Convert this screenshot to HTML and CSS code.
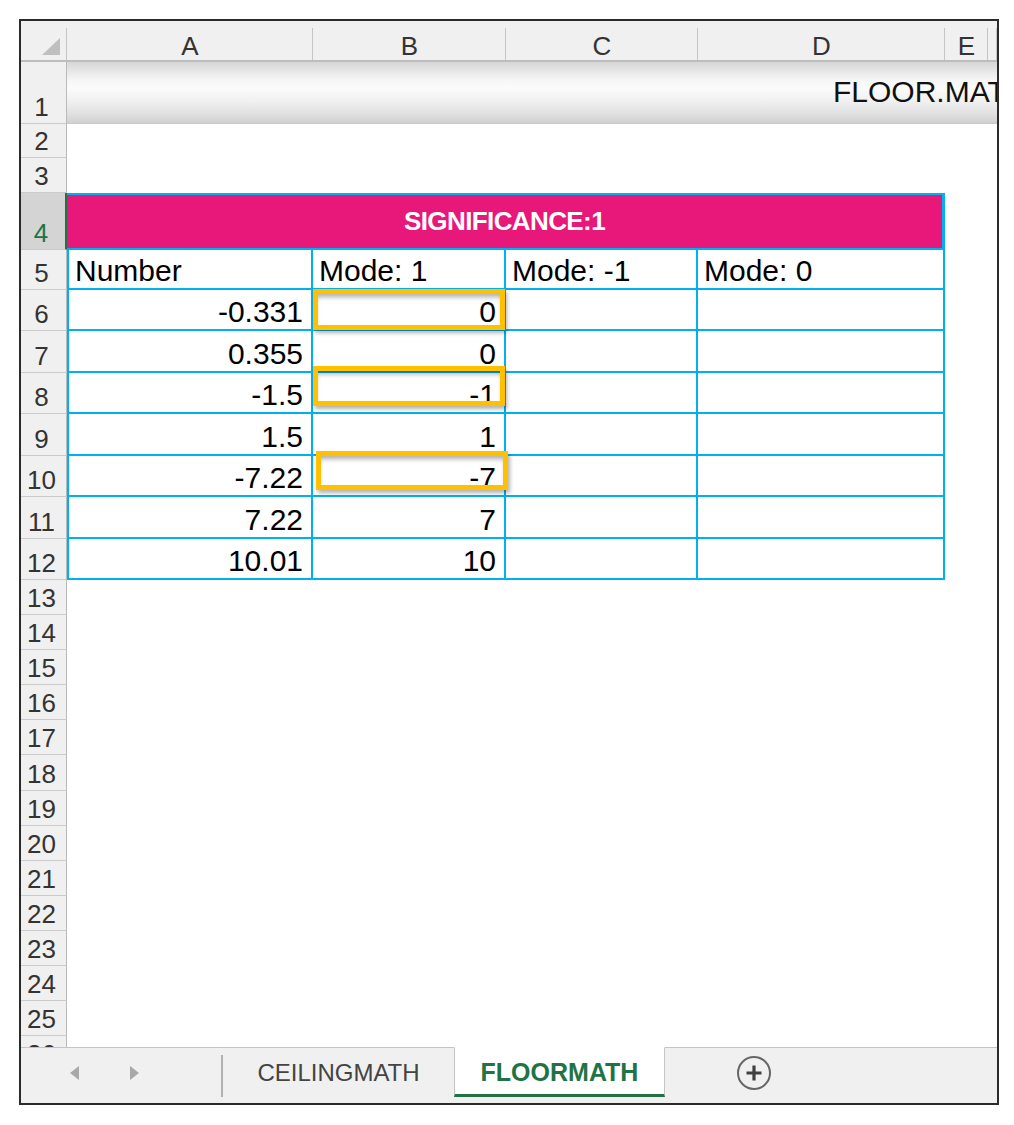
FILE: index.html
```html
<!DOCTYPE html>
<html>
<head>
<meta charset="utf-8">
<title>FLOOR.MATH</title>
<link rel="stylesheet" href="styles.css">
</head>
<body>
<div class="frame">
  <div class="sheet">
    <div class="ch corner"><svg class="corner-tri" width="46" height="41" viewBox="0 0 46 41"><polygon points="39,17 39,34 21,34" fill="#bfbfbf"/></svg></div>
    <div class="ch">A</div>
    <div class="ch">B</div>
    <div class="ch">C</div>
    <div class="ch">D</div>
    <div class="ch">E</div>
    <div class="ch"></div>

    <div class="rh">1</div><div class="banner"><span>FLOOR.MATH</span></div>
    <div class="rh">2</div><div class="blank"></div>
    <div class="rh">3</div><div class="blank"></div>
    <div class="rh sel">4</div><div class="title">SIGNIFICANCE:1</div><div class="rest"></div>

    <div class="rh">5</div><div class="c first">Number</div><div class="c">Mode: 1</div><div class="c">Mode: -1</div><div class="c">Mode: 0</div><div class="rest"></div>
    <div class="rh">6</div><div class="c first num">-0.331</div><div class="c num hl hl-1">0</div><div class="c"></div><div class="c"></div><div class="rest"></div>
    <div class="rh">7</div><div class="c first num">0.355</div><div class="c num">0</div><div class="c"></div><div class="c"></div><div class="rest"></div>
    <div class="rh">8</div><div class="c first num">-1.5</div><div class="c num hl hl-2">-1</div><div class="c"></div><div class="c"></div><div class="rest"></div>
    <div class="rh">9</div><div class="c first num">1.5</div><div class="c num">1</div><div class="c"></div><div class="c"></div><div class="rest"></div>
    <div class="rh">10</div><div class="c first num">-7.22</div><div class="c num hl hl-3">-7</div><div class="c"></div><div class="c"></div><div class="rest"></div>
    <div class="rh">11</div><div class="c first num">7.22</div><div class="c num">7</div><div class="c"></div><div class="c"></div><div class="rest"></div>
    <div class="rh">12</div><div class="c first num">10.01</div><div class="c num">10</div><div class="c"></div><div class="c"></div><div class="rest"></div>

    <div class="rh">13</div><div class="blank"></div>
    <div class="rh">14</div><div class="blank"></div>
    <div class="rh">15</div><div class="blank"></div>
    <div class="rh">16</div><div class="blank"></div>
    <div class="rh">17</div><div class="blank"></div>
    <div class="rh">18</div><div class="blank"></div>
    <div class="rh">19</div><div class="blank"></div>
    <div class="rh">20</div><div class="blank"></div>
    <div class="rh">21</div><div class="blank"></div>
    <div class="rh">22</div><div class="blank"></div>
    <div class="rh">23</div><div class="blank"></div>
    <div class="rh">24</div><div class="blank"></div>
    <div class="rh">25</div><div class="blank"></div>
    <div class="rh">26</div><div class="blank"></div>
  </div>

  <div class="tabs">
    <div class="nav">
      <span class="arrow arrow-left"></span>
      <span class="arrow arrow-right"></span>
    </div>
    <div class="sep"></div>
    <div class="tab">CEILINGMATH</div>
    <div class="tab active">FLOORMATH</div>
    <div class="add">
      <svg width="36" height="36" viewBox="0 0 36 36">
        <circle cx="18" cy="18" r="16" fill="none" stroke="#666" stroke-width="2"/>
        <path d="M18 10.5v15M10.5 18h15" stroke="#404040" stroke-width="3.2" fill="none"/>
      </svg>
    </div>
  </div>
</div>
</body>
</html>
```

FILE: styles.css
```css
* {
  box-sizing: border-box;
}

body {
  margin: 0;
  background: #ffffff;
  font-family: "Liberation Sans", Arial, sans-serif;
  color: #000;
}

.frame {
  margin: 19px 0 0 19px;
  width: 980px;
  height: 1086px;
  border: 2px solid #2a2a2a;
  display: flex;
  flex-direction: column;
  overflow: hidden;
  background: #fff;
}

.sheet {
  flex: none;
  height: 1026px;
  display: grid;
  grid-template-columns: 46px 246px 193px 192px 247px 43px 1fr;
  grid-template-rows: 41px 62px 34px 35px 57px 40px repeat(7, 41.43px) repeat(14, 35.1px);
  overflow: hidden;
}

/* column headers */
.ch {
  display: flex;
  justify-content: center;
  align-items: flex-end;
  padding-bottom: 1px;
  font-size: 26px;
  line-height: 1;
  color: #333;
  background:
    linear-gradient(#c4c4c4, #c4c4c4) right 0 bottom 0 / 1px calc(100% - 7px) no-repeat,
    #f0f0f0;
  border-bottom: 2px solid #bdbdbd;
}

.corner {
  position: relative;
  padding: 0;
}

.corner-tri {
  position: absolute;
  left: 0;
  top: 0;
}

/* row headers */
.rh {
  display: flex;
  justify-content: center;
  align-items: flex-end;
  padding: 0 4px 3px 0;
  font-size: 26px;
  line-height: 1;
  color: #333;
  background: #f0f0f0;
  border-bottom: 1px solid #cbcbcb;
  border-right: 1px solid #bababa;
}

.rh.sel {
  background: #d4d4d4;
  color: #217346;
  border-right: 2px solid #217346;
}

/* row 1 banner */
.banner {
  grid-column: 2 / -1;
  display: flex;
  align-items: flex-end;
  padding: 0 0 17px 766px;
  font-size: 30px;
  line-height: 1;
  white-space: nowrap;
  overflow: hidden;
  color: #111;
  background: linear-gradient(to bottom,
    #d6d6d6 0%,
    #e4e4e4 12%,
    #f6f6f6 30%,
    #fbfbfb 42%,
    #f1f1f1 62%,
    #e2e2e2 82%,
    #d2d2d2 97%,
    #c8c8c8 100%);
}

.blank {
  grid-column: 2 / -1;
}

.rest {
  grid-column: 6 / -1;
}

/* row 4 title */
.title {
  grid-column: 2 / 6;
  display: flex;
  justify-content: center;
  align-items: center;
  background: #e8177a;
  border: 2px solid #00b0f0;
  border-left: 0;
  border-right-width: 3px;
  color: #fff;
  font-weight: bold;
  font-size: 26px;
  letter-spacing: -0.6px;
  line-height: 1;
  padding-bottom: 2px;
}

/* table cells */
.c {
  display: flex;
  align-items: flex-end;
  padding: 0 8px 2px 6px;
  font-size: 30px;
  line-height: 1;
  white-space: nowrap;
  border-right: 2px solid #00b0f0;
  border-bottom: 2px solid #00b0f0;
}

.c.first {
  border-left: 2px solid #00b0f0;
}

.c.num {
  justify-content: flex-end;
}

.hl {
  position: relative;
}

.hl::after {
  content: "";
  position: absolute;
  border: 5px solid #ffc000;
  box-shadow: inset 0 5px 5px -2px rgba(0, 0, 0, 0.32), 2px 3px 4px rgba(0, 0, 0, 0.3);
  pointer-events: none;
  z-index: 2;
}

.hl-1::after {
  top: -1px;
  left: 0;
  right: -1px;
  bottom: -1px;
}

.hl-2::after {
  top: -7px;
  left: 0;
  right: -1px;
  bottom: 6px;
}

.hl-3::after {
  top: -5px;
  left: 3px;
  right: -4px;
  bottom: 5px;
}

/* sheet tabs */
.tabs {
  flex: none;
  height: 56px;
  display: flex;
  background: #f0f0f0;
  border-top: 1px solid #c4c4c4;
  padding-bottom: 6px;
}

.nav {
  width: 200px;
  display: flex;
  align-items: center;
  gap: 51px;
  padding-left: 49px;
}

.arrow {
  width: 0;
  height: 0;
  border-top: 7.5px solid transparent;
  border-bottom: 7.5px solid transparent;
}

.arrow-left {
  border-right: 9px solid #a8a8a8;
}

.arrow-right {
  border-left: 9px solid #a8a8a8;
}

.sep {
  width: 2px;
  margin-top: 7px;
  background: #b0b0b0;
}

.tab {
  display: flex;
  justify-content: center;
  align-items: center;
  font-size: 24px;
  color: #444;
  width: 231px;
}

.tab.active {
  width: 211px;
  margin-top: -1px;
  background: #fff;
  border-top: 1px solid #fff;
  border-left: 1px solid #c4c4c4;
  border-right: 1px solid #c4c4c4;
  border-bottom: 3px solid #217346;
  color: #217346;
  font-weight: bold;
  font-size: 25px;
  padding-top: 2px;
}

.add {
  display: flex;
  align-items: center;
  padding-left: 71px;
}
```
